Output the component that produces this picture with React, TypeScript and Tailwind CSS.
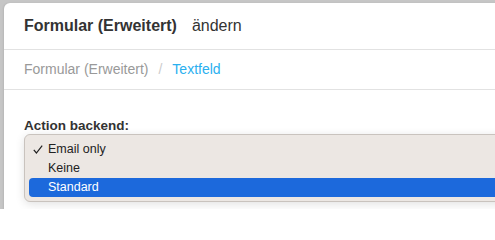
import React from "react";

export default function App() {
  return (
    <div className="relative w-[495px] h-[209px] overflow-hidden bg-[#c6c6c6] pl-[4px] pt-[3px] font-['Liberation_Sans',Arial,sans-serif]">
      <div className="w-[520px] h-[240px] bg-white rounded-tl-[6px] shadow-[-1px_0_2px_rgba(0,0,0,0.08)]">
        <div className="h-[47px] flex items-center px-5 border-b border-[#e2e2e2] text-[16px] text-[#333]">
          <span className="font-bold">Formular (Erweitert)</span>
          <span className="ml-[15px]">ändern</span>
        </div>
        <div className="h-[40px] flex items-center px-5 border-b border-[#e2e2e2] text-[14px]">
          <span className="text-[#999]">Formular (Erweitert)</span>
          <span className="text-[#ccc] mx-[10px]">/</span>
          <span className="text-[#2ab0ef]">Textfeld</span>
        </div>
        <div className="pt-[28px] px-5">
          <div className="text-[13.5px] leading-[16px] font-bold text-[#333]">Action backend:</div>
        </div>
      </div>
      <div className="absolute left-[24px] top-[134px] w-[490px] h-[68px] bg-[#ece7e3] border border-[#c9c3be] rounded-[6px] shadow-[0_2px_10px_rgba(0,0,0,0.12)] pt-[5px] px-[4px] text-[12.5px] text-[#222]">
        <div className="h-[19px] leading-[19px] flex items-center relative pl-[19px]">
          <svg className="absolute left-[4px] top-[5px]" width="10" height="9" viewBox="0 0 10 9">
            <polyline points="0.8,4.8 3.4,8 9.2,0.6" fill="none" stroke="#222" strokeWidth="1.2" />
          </svg>
          <span>Email only</span>
        </div>
        <div className="h-[19px] leading-[19px] pl-[19px]">Keine</div>
        <div className="h-[19px] leading-[19px] pl-[19px] bg-[#1c69dc] text-white rounded-[4px]">Standard</div>
      </div>
    </div>
  );
}
